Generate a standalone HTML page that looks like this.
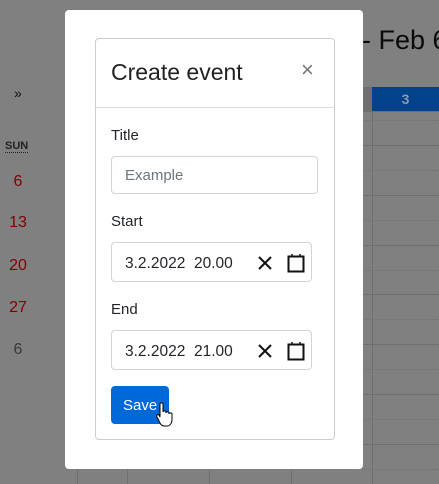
<!DOCTYPE html>
<html><head><style>
*{box-sizing:border-box;margin:0;padding:0}
body{width:439px;height:484px;background:#808080;position:relative;overflow:hidden;font-family:"Liberation Sans",sans-serif;color:#212529}
.a{position:absolute}
.hl{position:absolute;left:362px;width:77px;height:0;border-top:1px solid #6f6f6f}
.hd{position:absolute;left:362px;width:77px;height:0;border-top:1px dotted #707070}
.lbl{position:absolute;left:111px;font-size:15px;color:#212529}
.inp{position:absolute;left:111px;border:1px solid #ced4da;border-radius:4px;background:#fff}
.dt{font-size:16px;position:absolute;left:13px;top:11px;color:#212529;letter-spacing:0}
.num{position:absolute;width:36px;text-align:center;font-size:16px;color:#800000}
</style></head><body>
<div class="a" style="left:362px;top:25px;font-size:27px;color:#0a0a0a;white-space:nowrap">- Feb 6</div>
<div class="a" style="left:362px;top:87px;width:10px;height:24px;background:#6f6f6f"></div>
<div class="a" style="left:372px;top:87px;width:67px;height:24px;background:#02428a;color:#8a9ab0;font-weight:bold;font-size:14px;text-align:center;line-height:24px">3</div>
<div class="a" style="left:372px;top:111px;width:1px;height:373px;background:#6f6f6f"></div>
<div class="hl" style="top:111px"></div>
<div class="hd" style="top:120px"></div><div class="hl" style="top:145px"></div>
<div class="hd" style="top:170px"></div><div class="hl" style="top:195px"></div>
<div class="hd" style="top:220px"></div><div class="hl" style="top:245px"></div>
<div class="hd" style="top:270px"></div><div class="hl" style="top:294px"></div>
<div class="hd" style="top:319px"></div><div class="hl" style="top:344px"></div>
<div class="hd" style="top:369px"></div><div class="hl" style="top:394px"></div>
<div class="hd" style="top:419px"></div><div class="hl" style="top:444px"></div>
<div class="hd" style="top:469px"></div>
<div class="a" style="left:77px;top:468px;width:1px;height:16px;background:#6f6f6f"></div>
<div class="a" style="left:127px;top:468px;width:1px;height:16px;background:#6f6f6f"></div>
<div class="a" style="left:209px;top:468px;width:1px;height:16px;background:#6f6f6f"></div>
<div class="a" style="left:291px;top:468px;width:1px;height:16px;background:#6f6f6f"></div>
<div class="a" style="left:14px;top:85px;font-size:14px;color:#111">»</div>
<div class="a" style="left:5px;top:140px;font-size:11px;font-weight:bold;color:#222;border-bottom:1px dotted #222;line-height:12px">SUN</div>
<div class="num" style="left:0;top:173px">6</div>
<div class="num" style="left:0;top:214px">13</div>
<div class="num" style="left:0;top:257px">20</div>
<div class="num" style="left:0;top:299px">27</div>
<div class="num" style="left:0;top:341px;color:#3a3a3a">6</div>

<div class="a" style="left:65px;top:10px;width:298px;height:459px;background:#fff;border-radius:4px"></div>
<div class="a" style="left:95px;top:38px;width:240px;height:402px;border:1px solid #ccc;border-radius:4px"></div>
<div class="a" style="left:95px;top:107px;width:240px;height:1px;background:#ddd"></div>
<div class="a" style="left:111px;top:59px;font-size:23px;color:#222">Create event</div>
<div class="a" style="left:301px;top:57px;font-size:22px;color:#777">×</div>
<div class="lbl" style="top:127px">Title</div>
<div class="inp" style="top:156px;width:207px;height:38px"><span class="dt" style="color:#6c757d;font-size:15px;top:10px">Example</span></div>
<div class="lbl" style="top:213px">Start</div>
<div class="inp" style="top:242px;width:201px;height:40px"><span class="dt" style="font-size:15.5px;top:12px">3.2.2022&nbsp; 20.00</span>
<svg class="a" style="left:146px;top:13px" width="14" height="14" viewBox="0 0 14 14"><path d="M1 1L13 13M13 1L1 13" stroke="#111" stroke-width="2"/></svg>
<svg class="a" style="left:175px;top:10px" width="18" height="20" viewBox="0 0 18 20"><rect x="1.5" y="3.5" width="15" height="15" fill="none" stroke="#111" stroke-width="2"/><path d="M5 1V4M13 1V4" stroke="#111" stroke-width="1.5"/></svg></div>
<div class="lbl" style="top:301px">End</div>
<div class="inp" style="top:330px;width:201px;height:40px"><span class="dt" style="font-size:15.5px;top:12px">3.2.2022&nbsp; 21.00</span>
<svg class="a" style="left:146px;top:13px" width="14" height="14" viewBox="0 0 14 14"><path d="M1 1L13 13M13 1L1 13" stroke="#111" stroke-width="2"/></svg>
<svg class="a" style="left:175px;top:10px" width="18" height="20" viewBox="0 0 18 20"><rect x="1.5" y="3.5" width="15" height="15" fill="none" stroke="#111" stroke-width="2"/><path d="M5 1V4M13 1V4" stroke="#111" stroke-width="1.5"/></svg></div>
<div class="a" style="left:111px;top:386px;width:58px;height:38px;background:#0069d9;border-radius:4px;color:#fff;font-size:15px;line-height:40px;padding-left:12px">Save</div>
<svg class="a" style="left:156px;top:402px" width="18" height="26" viewBox="0 0 18 26"><path d="M4 2c0-1.5 3-1.5 3 0v8c0-1.5 3-1.5 3 0v1c0-1.5 3-1.5 3 0v1c0-1.5 3-1.5 3 0v6c0 3-2 6-5 6H8c-2 0-3-1-4-3L1 15c-1-2 1-3 2-2l1 2z" fill="#fff" stroke="#000" stroke-width="1"/></svg>
</body></html>
